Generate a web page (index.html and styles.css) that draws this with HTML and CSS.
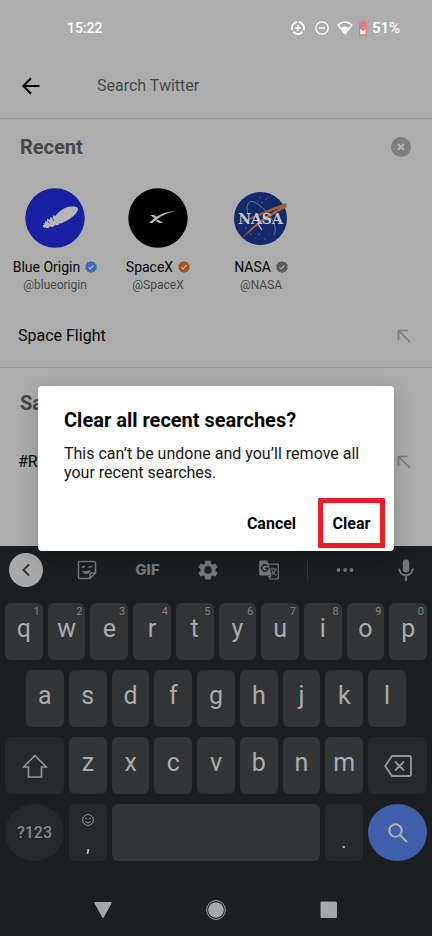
FILE: index.html
```html
<!DOCTYPE html>
<html lang="en">
<head>
<meta charset="utf-8">
<meta name="viewport" content="width=device-width, initial-scale=1">
<title>Search Twitter</title>
<link rel="stylesheet" href="styles.css">
</head>
<body>
<div class="status">
  <time>15:22</time>
  <div class="status-icons">
    <svg width="14" height="14" viewBox="0 0 14 14" fill="none" stroke="currentColor"><path d="M7.8 1A6 6 0 0 1 12.6 9.2M11.7 10.8A6 6 0 0 1 2.2 10.6M1.3 9A6 6 0 0 1 6.2 1" stroke-width="1.8"/><path d="M7 4.2v5.6M4.2 7h5.6" stroke-width="1.5"/></svg>
    <svg width="14" height="14" viewBox="0 0 14 14" fill="none" stroke="currentColor"><circle cx="7" cy="7" r="6.2" stroke-width="1.3"/><path d="M4 7h6" stroke-width="1.4"/></svg>
    <svg class="wifi" width="16" height="14" viewBox="0 0 16 14"><path d="M1 4.1Q8-2.2 15 4.1L8 12.8Z" fill="none" stroke="currentColor" stroke-width="1.3" stroke-linejoin="round"/><path d="M3.6 7.2Q8 3.9 12.4 7.2L8 13Z" fill="currentColor"/></svg>
    <svg width="8" height="15" viewBox="0 0 8 15"><path d="M2.2 0h3.6v1.4H8V15H0V1.4h2.2Z" fill="#f07676"/><circle cx="4" cy="5.5" r="2.7" fill="#c48e8e"/><path d="M1.3 8.2 4 10l2.700-1.800v5H1.300Z" fill="#fff"/></svg>
    <span>51%</span>
  </div>
</div>

<header class="search">
  <button class="plain" aria-label="Back"><svg width="20" height="18" viewBox="0 0 20 18" fill="none" stroke="#000" stroke-width="2"><path d="M18.500 9H2.500M10 1.300 2.300 9l7.700 7.700"/></svg></button>
  <input type="search" aria-label="Search Twitter" placeholder="Search Twitter">
</header>

<main>
  <section>
    <div class="section-head">
      <h2>Recent</h2>
      <button class="plain" aria-label="Clear recent searches"><svg width="20" height="20" viewBox="0 0 20 20"><circle cx="10" cy="10" r="10" fill="#7d7f80"/><path d="M7 7l6 6M13 7l-6 6" stroke="#b5b5b5" stroke-width="2"/></svg></button>
    </div>
    <ul class="accounts">
      <li>
        <svg width="60" height="60" viewBox="0 0 60 60"><circle cx="30" cy="30" r="29.7" fill="#1620a0"/><path d="M7.500 41.200 18 38.700l-.5-1.700 1.700.3-.9-2.300 1.900.6-.5-3.300 1.900 1.700.9-3.700 1.900 1.900 1.300-3.500 1.500 1.700 1.300-3.300 1.500 1.200C33.500 23.800 38.500 20 43 19c4.500-1 9.500-.5 10 1.500.4 2.500-3 6.500-6.500 9-3 2.200-6.500 4.500-11 6.200l-.5-1-1.200 2-3 .9-.8-1.200-1 2-3.300.7-.8-1-1 1.700-3 .4-.6-1.200-1 1.200-1-1.500Z" fill="#b4b6b9"/><path d="M23 33l1.500 2.500M27.500 30l1.200 3" fill="none" stroke="#1620a0" stroke-width=".6"/></svg>
        <div class="name">Blue Origin <svg width="12" height="12" viewBox="0 0 12 12"><path d="M6 0 7.500 1.100 9.500 1 10.300 2.700 11.800 4 11.300 6l.5 2-1.500 1.300-.8 1.700-2-.1L6 12 4.500 10.900l-2 .1-.8-1.700L.2 8 .7 6 .2 4l1.500-1.300L2.500 1l2 .1Z" fill="#426ab4"/><path d="M3.600 6.100 5.300 7.900 8.500 4.200" fill="none" stroke="#bbb" stroke-width="1.200"/></svg></div>
        <div class="handle">@blueorigin</div>
      </li>
      <li>
        <svg width="60" height="60" viewBox="0 0 60 60"><circle cx="30" cy="30" r="29.700" fill="#000"/><path d="M22 27h4l3 2.100-1.900 1.300Zm7.900 4.500 5.400 3.400h-4.200l-3.200-2Z" fill="#b9b9b9"/><path d="M21 35c7-6.700 14.500-11.500 29-12.400-12 2-18.500 6.400-25.300 12.400Z" fill="#b9b9b9"/></svg>
        <div class="name">SpaceX <svg width="12" height="12" viewBox="0 0 12 12"><path d="M6 0 7.500 1.100 9.500 1 10.300 2.700 11.800 4 11.300 6l.5 2-1.500 1.300-.8 1.700-2-.1L6 12 4.500 10.900l-2 .1-.8-1.700L.2 8 .7 6 .2 4l1.500-1.300L2.500 1l2 .1Z" fill="#a4541d"/><path d="M3.600 6.100 5.300 7.900 8.500 4.200" fill="none" stroke="#bbb" stroke-width="1.200"/></svg></div>
        <div class="handle">@SpaceX</div>
      </li>
      <li>
        <svg width="60" height="60" viewBox="0 0 60 60"><circle cx="29.500" cy="30.500" r="26.500" fill="#14296b"/><g fill="#a9b2c5"><circle cx="29" cy="9" r=".5"/><circle cx="35" cy="11" r=".5"/><circle cx="31" cy="14" r=".6"/><circle cx="37" cy="9" r=".4"/><circle cx="27" cy="13" r=".4"/><circle cx="15" cy="40" r=".5"/><circle cx="20" cy="46" r=".5"/><circle cx="28" cy="46" r=".6"/><circle cx="34" cy="51" r=".5"/><circle cx="24" cy="50" r=".4"/><circle cx="38" cy="46" r=".4"/></g><g fill="none" stroke="#8e9bb8" stroke-width=".7"><path d="M17.500 28C14 18 17 10 25 15c12 7 24 25 17.500 32"/></g><path d="M10 51.300C23 39 39 28 56 19l-1-4C35 22 17 31 2 37.500 24 30 38 24 49 20 35 27 21 38 10 51.300Z" fill="#a95d32"/><text x="29.500" y="35.500" text-anchor="middle" class="nasa">NASA</text><path d="M27 36l4 6" stroke="#bfc4cc" stroke-width="1.300"/></svg>
        <div class="name">NASA <svg width="12" height="12" viewBox="0 0 12 12"><path d="M6 0 7.500 1.100 9.500 1 10.300 2.700 11.800 4 11.300 6l.5 2-1.500 1.300-.8 1.700-2-.1L6 12 4.500 10.900l-2 .1-.8-1.700L.2 8 .7 6 .2 4l1.500-1.300L2.500 1l2 .1Z" fill="#565d62"/><path d="M3.600 6.100 5.300 7.900 8.500 4.200" fill="none" stroke="#aaa" stroke-width="1.200"/></svg></div>
        <div class="handle">@NASA</div>
      </li>
    </ul>
    <a class="query" href="#"><span>Space Flight</span><svg width="14" height="14" viewBox="0 0 14 14" fill="none" stroke="#7b7d7e" stroke-width="1.700"><path d="M1.500 11V1.500H11M1.500 1.500 13 13"/></svg></a>
  </section>
  <section class="saved">
    <div class="section-head"><h2>Saved</h2></div>
    <a class="query" href="#"><span>#R</span><svg width="14" height="14" viewBox="0 0 14 14" fill="none" stroke="#7b7d7e" stroke-width="1.700"><path d="M1.500 11V1.500H11M1.500 1.500 13 13"/></svg></a>
  </section>
</main>

<div class="keyboard">
  <div class="tools">
    <button class="collapse" aria-label="Collapse"><svg width="10" height="14" viewBox="0 0 10 14" fill="none" stroke="#333638" stroke-width="2"><path d="M8 1.500 2.500 7 8 12.500"/></svg></button>
    <button aria-label="Stickers"><svg width="20" height="20" viewBox="0 0 20 20" fill="none" stroke="currentColor" stroke-width="1.600"><path d="M3 1.500h14a1.500 1.500 0 0 1 1.500 1.500v10L13 18.500H3A1.500 1.500 0 0 1 1.500 17V3A1.500 1.500 0 0 1 3 1.500Z"/><path d="M18 13h-3.500a1.500 1.500 0 0 0-1.500 1.500V18" /><path d="M5 7.500 8 6M12 7.800Q13.500 5.500 15 7.200"/><path d="M5 11Q10 11.500 14 10 12.500 14 9.500 14 6.500 14 5 11Z" fill="currentColor" stroke="none"/></svg></button>
    <button class="gif">GIF</button>
    <button aria-label="Settings"><svg width="20" height="20" viewBox="2 2 20 20"><path fill="currentColor" fill-rule="evenodd" d="M19.400 13c.1-.7.1-1.300 0-2l2.200-1.700-2.200-3.800-2.600 1a8 8 0 0 0-1.700-1L14.700 2.500H9.300L8.900 5.500a8 8 0 0 0-1.700 1l-2.600-1-2.200 3.800L4.600 11c-.1.700-.1 1.300 0 2l-2.200 1.700 2.200 3.800 2.600-1q.8.600 1.700 1l.4 3h5.400l.4-3q.9-.4 1.700-1l2.600 1 2.200-3.800ZM12 8.200a3.800 3.800 0 1 1 0 7.600 3.800 3.800 0 0 1 0-7.600Z"/></svg></button>
    <button aria-label="Translate"><svg width="20" height="20" viewBox="0 0 20 20"><path d="M8 4.200h10.300q1 0 1 1V18q0 1-1 1H10" fill="none" stroke="currentColor" stroke-width="1.200"/><path d="M1.200.5h7.300L12.800 15.500H1.200Q.2 15.500.2 14.500v-13Q.2.500 1.200.5Z" fill="currentColor"/><path d="M9 16l4-.5-2.500 3.500Z" fill="currentColor"/><path d="M8.300 5.900A3.200 3.200 0 1 0 9 8.300H6" fill="none" stroke="#1b1f21" stroke-width="1.400"/><path d="M11 9h7M14.300 7.500V9M16.800 9q-.8 3.300-4 5.500M12.800 10.500q1.500 3 4.500 4.700" fill="none" stroke="currentColor" stroke-width="1.100"/></svg></button>
    <span class="rule"></span>
    <button aria-label="More"><svg width="18" height="4" viewBox="0 0 18 4" fill="currentColor"><circle cx="2.500" cy="2" r="1.900"/><circle cx="9" cy="2" r="1.900"/><circle cx="15.500" cy="2" r="1.900"/></svg></button>
    <button class="mic" aria-label="Voice input"><svg width="16" height="22" viewBox="0 0 16 22"><rect x="4.800" y=".5" width="6.400" height="13" rx="3.200" fill="currentColor"/><path d="M1.200 9.500a6.800 6.800 0 0 0 13.600 0M8 16.500V22" fill="none" stroke="currentColor" stroke-width="1.900"/></svg></button>
  </div>
  <div class="rows">
    <div class="row">
      <button>q<small>1</small></button><button>w<small>2</small></button><button>e<small>3</small></button><button>r<small>4</small></button><button>t<small>5</small></button><button>y<small>6</small></button><button>u<small>7</small></button><button>i<small>8</small></button><button>o<small>9</small></button><button>p<small>0</small></button>
    </div>
    <div class="row inset">
      <button>a</button><button>s</button><button>d</button><button>f</button><button>g</button><button>h</button><button>j</button><button>k</button><button>l</button>
    </div>
    <div class="row">
      <button class="wide dark" aria-label="Shift"><svg width="26" height="24" viewBox="0 0 26 24" fill="none" stroke="currentColor" stroke-width="1.700"><path d="M13 1.500 24.300 13H19.500v10h-13V13H1.700Z"/></svg></button><button>z</button><button>x</button><button>c</button><button>v</button><button>b</button><button>n</button><button>m</button><button class="wide dark" aria-label="Backspace"><svg width="28" height="22" viewBox="0 0 28 22" fill="none" stroke="currentColor" stroke-width="1.900"><path d="M8 1h17.500Q27 1 27 2.500v17Q27 21 25.500 21H8L1.200 11ZM11 6.500l9 9M20 6.500l-9 9"/></svg></button>
    </div>
    <div class="row">
      <button class="wide dark round symbols">?123</button>
      <button class="dark comma"><svg width="12" height="12" viewBox="0 0 12 12" fill="none" stroke="currentColor"><circle cx="6" cy="6" r="5.400"/><path d="M3.200 7.200Q6 10.500 8.800 7.200" /><path d="M4 3.700v1.500M8 3.700v1.500" stroke-width="1.300"/></svg><span>,</span></button>
      <button class="space" aria-label="Space"></button>
      <button class="dark period">.</button>
      <button class="wide round go" aria-label="Search"><svg width="20" height="20" viewBox="0 0 20 20" fill="none" stroke="currentColor" stroke-width="2"><circle cx="7.500" cy="7.500" r="6.200"/><path d="M12 12l7 7"/></svg></button>
    </div>
  </div>
  <nav>
    <button class="plain" aria-label="Back"><svg width="18" height="16" viewBox="0 0 18 16"><path d="M1 .8h16L9 15.200Z" fill="#a6a7a8" stroke="#a6a7a8" stroke-width="1.400" stroke-linejoin="round"/></svg></button>
    <button class="plain" aria-label="Home"><svg width="20" height="20" viewBox="0 0 20 20"><circle cx="10" cy="10" r="9.400" fill="none" stroke="#a6a7a8"/><circle cx="10" cy="10" r="7.800" fill="#a6a7a8"/></svg></button>
    <button class="plain" aria-label="Overview"><svg width="18" height="18" viewBox="0 0 18 18"><rect x=".5" y=".5" width="16.500" height="16.500" rx="1.200" fill="#a6a7a8"/></svg></button>
  </nav>
</div>

<div class="overlay">
  <div class="dialog" role="alertdialog" aria-modal="true" aria-labelledby="dialog-title" aria-describedby="dialog-text">
    <h1 id="dialog-title">Clear all recent searches?</h1>
    <p id="dialog-text">This can’t be undone and you’ll remove all your recent searches.</p>
    <div class="actions"><button>Cancel</button><button class="confirm">Clear</button></div>
  </div>
</div>
</body>
</html>
```
FILE: styles.css
```css
* { box-sizing: border-box; }

body {
  display: flex;
  flex-direction: column;
  min-height: 100vh;
  margin: 0;
  background: #adadad;
  color: #060606;
  font: 16px/20px Roboto, sans-serif;
}

h1, h2, p, ul { margin: 0; padding: 0; }
svg { display: block; flex: none; }
button { padding: 0; border: 0; background: none; color: inherit; font: inherit; }
.plain { display: grid; place-items: center; }

/* Status bar */
.status {
  display: flex;
  align-items: center;
  justify-content: space-between;
  height: 56px;
  padding: 0 32px 0 67px;
  color: #fff;
  font-size: 14px;
  font-weight: 500;
}
.status-icons { display: flex; align-items: center; font-size: 15px; }
.status-icons svg { margin-right: 10px; }
.status-icons .wifi { margin: 0 6px 0 -2px; }
.status-icons .wifi + svg { margin-right: 5px; }

/* Search field */
.search {
  display: flex;
  align-items: center;
  height: 63px;
  padding: 0 0 2px 21px;
  border-bottom: 1px solid #999b9b;
}
.search input {
  flex: 1;
  min-width: 0;
  margin-left: 56px;
  padding: 0;
  border: 0;
  outline: 0;
  background: none;
  font: inherit;
}
.search input::placeholder { color: #46494b; opacity: 1; }

/* Search history */
main { flex: 1; }
.section-head {
  display: flex;
  align-items: center;
  justify-content: space-between;
  height: 55px;
  padding: 0 21px 0 20px;
}
h2 { color: #46494b; font-size: 20px; font-weight: 700; }
.accounts {
  display: grid;
  grid-template-columns: repeat(3, 102px);
  gap: 1px;
  padding: 14px 4px 10px;
  list-style: none;
}
.accounts li { display: flex; flex-direction: column; align-items: center; }
.name { display: flex; align-items: center; gap: 5px; margin-top: 9px; font-size: 14px; }
.handle { color: #46494b; font-size: 12px; line-height: 16px; }
.nasa { fill: #c3c6cc; font: bold 14px "DejaVu Serif", serif; }
.query {
  display: flex;
  align-items: center;
  justify-content: space-between;
  height: 64px;
  padding: 2px 21px 0 18px;
  color: inherit;
  text-decoration: none;
}
.saved { border-top: 1px solid #9c9d9d; }
.saved .section-head { height: 70px; }
.saved .query { height: 46px; }

/* Keyboard */
.keyboard { background: #1b1f21; color: #a9abac; }
.tools {
  display: grid;
  grid-template-columns: 52fr 69fr 53fr 68fr 54fr 22fr 53fr 61fr;
  align-items: center;
  height: 48px;
  color: #737678;
}
.tools button { display: grid; place-items: center; }
.tools .mic { padding-left: 9px; }
.tools .collapse {
  justify-self: center;
  width: 34px;
  height: 34px;
  border-radius: 50%;
  background: #a9a9aa;
}
.tools .gif { font: 800 15px/20px Inter, sans-serif; }
.rule { justify-self: center; width: 1px; height: 22px; background: #303436; }
.rows { display: grid; gap: 10px; padding: 9px 5px 0; }
.row { display: flex; gap: 5px; height: 57px; }
.row.inset { padding: 0 21px; }
.row button {
  position: relative;
  display: flex;
  flex: 1;
  align-items: center;
  justify-content: center;
  min-width: 0;
  padding-bottom: 5px;
  border-radius: 6px;
  background: #323436;
  font-size: 25px;
}
.row small { position: absolute; top: 2px; right: 3px; color: #7f8182; font-size: 11px; line-height: 14px; }
.row .dark { background: #25292c; color: #929496; }
.row .wide { flex: 0 0 59px; padding: 0; }
.row .round { border-radius: 50%; }
.row .symbols { color: #858789; font-size: 16px; font-weight: 500; }
.row .comma, .row .period { flex: 0 0 38px; }
.row .comma { flex-direction: column; gap: 8px; padding: 2px 0 0; }
.row .comma span, .row .period { color: #bbb; font-size: 20px; line-height: 20px; }
.row .period { padding: 16px 0 0; }
.row .go { background: #405fab; color: #b3b3b3; }
nav {
  display: flex;
  align-items: center;
  justify-content: center;
  gap: 94px;
  height: 75px;
  padding-top: 22px;
}

/* Confirmation dialog */
.overlay { position: absolute; inset: 0; display: grid; align-items: center; padding: 0 38px; }
.dialog {
  padding: 22px 9px 3px 26px;
  border-radius: 4px;
  background: #fff;
  box-shadow: 0 6px 18px #00000040;
}
h1 { font-size: 20px; line-height: 24px; font-weight: 700; }
.dialog p { margin: 12px 16px 16px 0; line-height: 19px; color: #171717; }
.actions { display: flex; justify-content: flex-end; gap: 13px; }
.actions button { width: 67px; height: 50px; padding-top: 2px; font-weight: 700; }
.actions .confirm { border: 5px solid #ed1c28; border-radius: 1px; }
```
